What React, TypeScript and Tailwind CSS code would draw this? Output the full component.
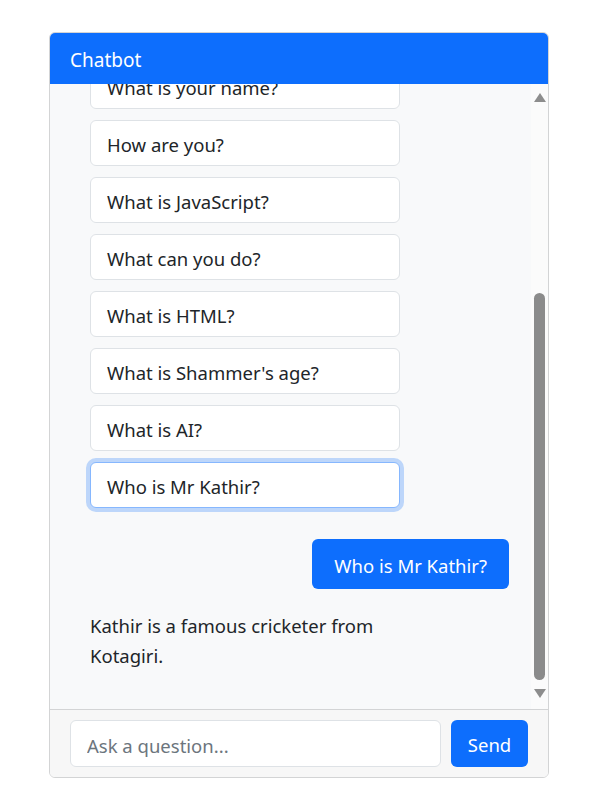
const questions = [
  "What is your name?",
  "How are you?",
  "What is JavaScript?",
  "What can you do?",
  "What is HTML?",
  "What is Shammer's age?",
  "What is AI?",
  "Who is Mr Kathir?",
]

function Scrollbar() {
  return (
    <div className="w-[17px] shrink-0 bg-[#fbfbfb] flex flex-col items-center">
      <svg className="mt-[9px]" width="12" height="9" viewBox="0 0 12 9">
        <polygon points="6,0 12,9 0,9" fill="#8d8d8d" />
      </svg>
      <div className="mt-[191px] h-[387px] w-[11px] rounded-full bg-[#8b8b8b]" />
      <svg className="mt-[9px]" width="12" height="9" viewBox="0 0 12 9">
        <polygon points="0,0 12,0 6,9" fill="#8d8d8d" />
      </svg>
    </div>
  )
}

export default function App() {
  const last = questions.length - 1
  return (
    <div className="min-h-screen bg-white pt-8 pl-[49px] font-['Noto_Sans',sans-serif] text-[#212529]">
      <div className="w-[500px] h-[746px] border border-[#d3d4d5] rounded-md overflow-hidden flex flex-col">
        <div className="h-[51px] shrink-0 bg-[#0d6efd] px-5 pt-[3px] flex items-center text-white text-[19px]">
          Chatbot
        </div>

        <div className="h-[625px] shrink-0 bg-[#f8f9fa] flex flex-row">
          <div className="flex-1 overflow-hidden flex flex-col justify-end pl-5 pr-[22px] pb-[28px] text-[18.5px] leading-[30px]">
            <div className="ml-5 w-[310px] flex flex-col gap-[11px]">
              {questions.map((q, i) => (
                <button
                  key={i}
                  className={
                    i === last
                      ? "h-[46px] shrink-0 text-left px-4 pt-[3px] bg-white rounded-md border border-[#86b7fe] ring-4 ring-[#0d6efd]/25"
                      : "h-[46px] shrink-0 text-left px-4 pt-[3px] bg-white rounded-md border border-[#dee2e6]"
                  }
                >
                  {q}
                </button>
              ))}
            </div>

            <div className="flex justify-end mt-[31px]">
              <div className="h-[50px] bg-[#0d6efd] text-white rounded-md px-[22px] pt-[12px] pb-[8px]">
                Who is Mr Kathir?
              </div>
            </div>

            <div className="mt-[12px] px-5 py-[10px]">
              <div className="max-w-[320px]">Kathir is a famous cricketer from Kotagiri.</div>
            </div>
          </div>
          <Scrollbar />
        </div>

        <div className="flex-1 border-t border-[#d3d4d5] bg-[#f7f7f7] px-5 py-[10px] flex gap-[10px]">
          <input
            className="flex-1 h-[47px] bg-white border border-[#dee2e6] rounded-md px-4 pt-[3px] text-[18.5px] placeholder:text-[#6c757d] outline-none"
            placeholder="Ask a question..."
          />
          <button className="w-[77px] h-[47px] pt-[3px] bg-[#0d6efd] text-white rounded-md text-[18.5px]">
            Send
          </button>
        </div>
      </div>
    </div>
  )
}
